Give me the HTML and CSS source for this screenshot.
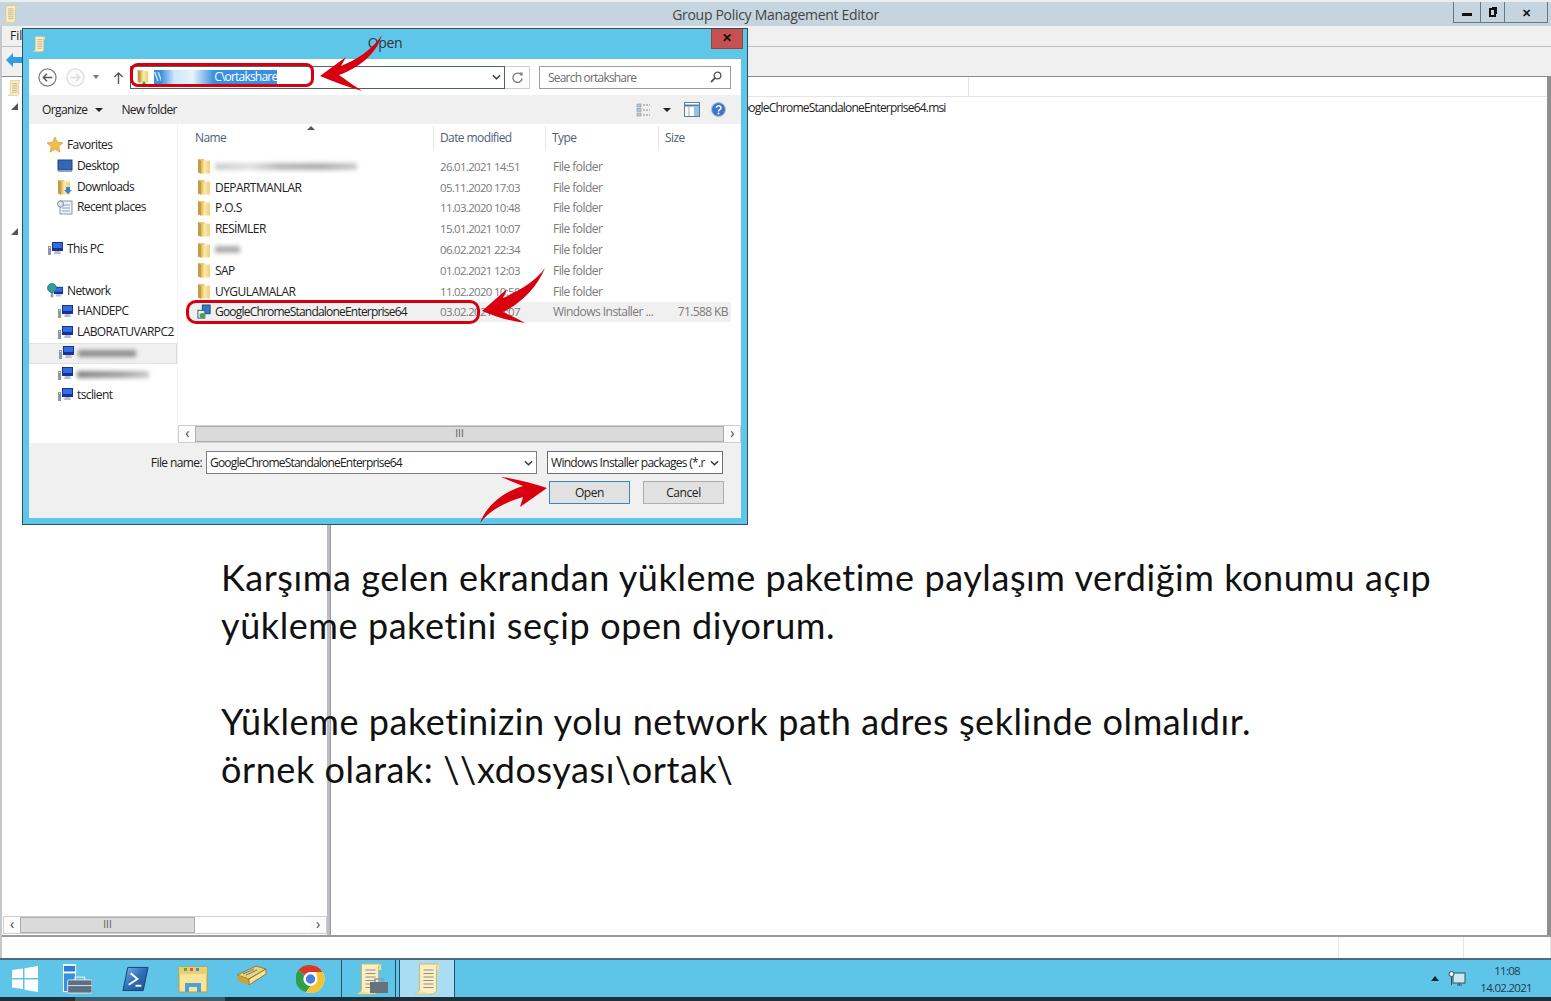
FILE: index.html
```html
<!DOCTYPE html>
<html lang="tr">
<head>
<meta charset="utf-8">
<title>Group Policy Management Editor</title>
<link rel="stylesheet" href="styles.css">
</head>
<body>
<svg class="sprite" aria-hidden="true">
  <defs>
    <linearGradient id="fg" x1="0" y1="0" x2="1" y2="0"><stop offset="0" stop-color="#cfa548"/><stop offset=".45" stop-color="#fbe9a6"/><stop offset="1" stop-color="#f0d07a"/></linearGradient>
    <linearGradient id="psg" x1="0" y1="0" x2="1" y2="1"><stop offset="0" stop-color="#7fb4e6"/><stop offset=".5" stop-color="#2f6fb8"/><stop offset="1" stop-color="#1d4f8c"/></linearGradient>
    <symbol id="folder" viewBox="0 0 14 16"><path d="M1 1h6l1 1.500v12.500H1z" fill="#e8c878"/><path d="M3 2.500l10 0v13H3z" fill="url(#fg)"/><path d="M1 1l3 2v12.500l-3-1z" fill="#c79c40"/></symbol>
    <symbol id="pc" viewBox="0 0 16 16"><rect x="5" y="1" width="11" height="9" fill="#1a2f9c"/><rect x="6" y="2" width="9" height="5" fill="#2f6fe0"/><path d="M8 10h5l1 3H7z" fill="#b7bec8"/><path d="M1 5h3v9H1z" fill="#8b98a6"/><path d="M2 6h1v1H2z" fill="#fff"/></symbol>
    <symbol id="scroll" viewBox="1 1 27 32"><path d="M7 2h19c-2 2-2 4-2 6v20c0 2-2 4-4 4H3c3-1 4-3 4-6z" fill="#fbefc0" stroke="#cfb56f"/><path d="M24 8c0-3 1-5 3-6-1 3 0 5 0 6z" fill="#f3dc98"/><path d="M3 32c2-2 6-3 8-2l9 2z" fill="#f3dc98"/><path d="M11 8h10M11 11.500h10M11 15h10M11 18.500h10M11 22h10M11 25.500h10" stroke="#8e8e8e" stroke-width="1"/></symbol>
  </defs>
</svg>

<div class="desktop">
  <div class="gpme">
    <header class="gpme-title">
      <svg class="title-ico"><use href="#scroll"/></svg>
      <span class="gpme-caption">Group Policy Management Editor</span>
      <div class="caption-btns">
        <span class="cb cb-min"><i></i></span>
        <span class="cb cb-max"><i></i></span>
        <span class="cb cb-close">✕</span>
      </div>
    </header>
    <div class="gpme-menu"><span>File</span></div>
    <div class="gpme-tools">
      <svg class="back-arrow" viewBox="0 0 16 14"><path d="M0 7l7-7v4h9v6H7v4z" fill="#2f9fe0"/></svg>
    </div>
    <div class="gpme-body">
      <aside class="pane-left">
        <div class="tree">
          <svg class="tree-ico"><use href="#scroll"/></svg>
          <span class="tri tri-one"></span>
          <span class="tri tri-two"></span>
        </div>
        <div class="hscroll">
          <span class="sb-btn">‹</span>
          <span class="sb-thumb">III</span>
          <span class="sb-track"></span>
          <span class="sb-btn">›</span>
        </div>
      </aside>
      <div class="splitter"></div>
      <main class="pane-right">
        <div class="pr-head"><span class="pr-head-cell"></span></div>
        <div class="pr-row">GoogleChromeStandaloneEnterprise64.msi</div>
      </main>
      <div class="edge"></div>
    </div>
    <footer class="gpme-status"><span class="st st-a"></span><span class="st st-b"></span><span class="st st-c"></span></footer>
  </div>

  <nav class="taskbar">
    <svg class="tb-win" viewBox="0 0 26 26"><path d="M0 4l11-1.500V12H0zM12.500 2.300L26 0v12H12.500zM0 13.500h11V23L0 21.500zM12.500 13.500H26V26l-13.500-2.200z" fill="#fff"/></svg>
    <svg class="tb-server" viewBox="0 0 32 32"><path d="M1 0h14v30H1z" fill="#fff"/><path d="M2 2h12v6H2z" fill="#2a7fd0"/><path d="M2 10h12v19H2z" fill="#3590de"/><rect x="6" y="17" width="26" height="14" rx="1" fill="#5d7083" stroke="#dfe6ec"/><path d="M14 17v-3h10v3" fill="none" stroke="#dfe6ec" stroke-width="1.500"/><path d="M6 23h26" stroke="#dfe6ec"/></svg>
    <svg class="tb-ps" viewBox="0 0 28 26"><path d="M6 1h21l-5 24H1z" fill="url(#psg)" stroke="#16406f"/><path d="M9 7l7 6-9 6" fill="none" stroke="#fff" stroke-width="2"/><path d="M14 20h6" stroke="#fff" stroke-width="2"/></svg>
    <svg class="tb-exp" viewBox="0 0 30 30"><path d="M1 3h28v25H1z" fill="#f9e59a" stroke="#c79a35"/><path d="M1 3h28v7H1z" fill="#ecce6e"/><rect x="6" y="4" width="3" height="3" fill="#4caf50"/><rect x="12" y="4" width="3" height="3" fill="#d9534f"/><rect x="18" y="4" width="3" height="3" fill="#3f8fd8"/><path d="M7 28v-9h16v9h-4v-5h-8v5z" fill="#4f9fd8"/></svg>
    <svg class="tb-book" viewBox="0 0 30 22"><path d="M0 10L19 1l10 3-17 10z" fill="#e9d27a" stroke="#8d7a35"/><path d="M0 10l12 4v6L1 16z" fill="#c9a33a"/><path d="M12 14l17-10v5L12 20z" fill="#f3e39b" stroke="#8d7a35"/><path d="M6 9l11-5M9 10l11-5" stroke="#58788f"/></svg>
    <svg class="tb-chrome" viewBox="0 0 28 30"><circle cx="14" cy="15" r="14" fill="#fff"/><path d="M14 1a14 14 0 0 1 12.100 7H14a7 7 0 0 0-6.100 3.500L2 6a14 14 0 0 1 12-5z" fill="#d9382c"/><path d="M2 6l5.900 5.500A7 7 0 0 0 14 22l-4.500 6.300A14 14 0 0 1 2 6z" fill="#2f9e48"/><path d="M26.100 8A14 14 0 0 1 9.500 28.300L14 22a7 7 0 0 0 6-10.500L20 8z" fill="#f4c430"/><circle cx="14" cy="15" r="5.400" fill="#4a7fe0" stroke="#fff" stroke-width="1.400"/></svg>
    <div class="tb-task tb-task-gp">
      <svg class="tb-scroll"><use href="#scroll"/></svg>
      <svg class="tb-case" viewBox="0 0 20 16"><rect x="1" y="4" width="18" height="11" fill="#66717c"/><path d="M6 4V1h8v3" fill="none" stroke="#8f9aa3" stroke-width="1.500"/></svg>
    </div>
    <div class="tb-task tb-task-active"><svg class="tb-scroll"><use href="#scroll"/></svg></div>
    <div class="tray">
      <span class="tray-tri"></span>
      <svg class="tray-net" viewBox="0 0 18 18"><rect x="5" y="3" width="12" height="10" fill="#cfe7ee" stroke="#35505f"/><path d="M9 15h5M11.500 13v2" stroke="#35505f"/><circle cx="3.500" cy="4" r="2.500" fill="#eef5f7" stroke="#35505f"/><path d="M3.500 6.500V15" stroke="#35505f"/></svg>
      <div class="clock"><span>11:08</span><span>14.02.2021</span></div>
    </div>
  </nav>
  <div class="strip"><span class="strip-thumb"></span></div>

  <section class="dialog">
    <header class="dlg-title">
      <svg class="dlg-ico"><use href="#scroll"/></svg>
      <span class="dlg-caption">Open</span>
      <span class="dlg-close">✕</span>
    </header>
    <div class="dlg-inner">
      <div class="addr-row">
        <svg class="nav-back" viewBox="0 0 20 20"><circle cx="10" cy="10" r="9" fill="#fff" stroke="#7c7c7c" stroke-width="1.300"/><path d="M15 10H6M9.500 6L5.500 10l4 4" fill="none" stroke="#555" stroke-width="1.500"/></svg>
        <svg class="nav-fwd" viewBox="0 0 20 20"><circle cx="10" cy="10" r="9" fill="#fafafa" stroke="#dcdcdc" stroke-width="1.300"/><path d="M5 10h9M10.500 6l4 4-4 4" fill="none" stroke="#dcdcdc" stroke-width="1.500"/></svg>
        <span class="nav-drop"></span>
        <svg class="nav-up" viewBox="0 0 12 14"><path d="M6 14V2M1.500 6.500L6 2l4.500 4.500" fill="none" stroke="#555" stroke-width="1.500"/></svg>
        <div class="addr-box">
          <svg class="addr-folder" viewBox="0 0 14 16"><use href="#folder" width="14" height="14"/><path d="M5 16l3-4 3 4z" fill="#3aa655"/></svg>
          <span class="addr-sel">\\<span class="addr-gap"></span>C\ortakshare</span>
          <svg class="chev" viewBox="0 0 10 6"><path d="M1 1l4 4 4-4" fill="none" stroke="#333" stroke-width="1.500"/></svg>
        </div>
        <div class="refresh"><svg viewBox="0 0 14 14"><path d="M11.500 5A5 5 0 1 0 12 8" fill="none" stroke="#7a7a7a" stroke-width="1.400"/><path d="M9 1.500h3.500V5z" fill="#7a7a7a"/></svg></div>
        <div class="search-box"><span>Search ortakshare</span><svg viewBox="0 0 12 12"><circle cx="7.500" cy="4.500" r="3.300" fill="none" stroke="#555" stroke-width="1.300"/><path d="M5 7l-4 4" stroke="#555" stroke-width="1.800"/></svg></div>
      </div>
      <div class="dlg-tools">
        <span class="tool">Organize</span><span class="tool-tri"></span>
        <span class="tool tool-new">New folder</span>
        <div class="tool-right">
          <svg class="tool-view" viewBox="0 0 15 14"><rect x="1" y="1" width="4" height="3" fill="#b7c6d3" stroke="#8b9aa6" stroke-width=".6"/><rect x="1" y="5.500" width="4" height="3" fill="#b7c6d3" stroke="#8b9aa6" stroke-width=".6"/><rect x="1" y="10" width="4" height="3" fill="#b7c6d3" stroke="#8b9aa6" stroke-width=".6"/><path d="M7 2h7M7 7h7M7 12h7" stroke="#8a8a8a" stroke-dasharray="2 1"/></svg>
          <span class="tool-tri tool-tri-dark"></span>
          <svg class="tool-pane" viewBox="0 0 16 15"><rect x=".5" y=".5" width="15" height="14" fill="#fff" stroke="#5f7c93"/><path d="M.5 3.500h15" stroke="#5f7c93" stroke-width="2"/><rect x="10" y="4" width="5" height="10" fill="#8fc2ea"/><path d="M5 4v10" stroke="#9ab"/></svg>
          <svg class="tool-help" viewBox="0 0 15 15"><circle cx="7.500" cy="7.500" r="7" fill="#3f76c9" stroke="#a8c3e6"/><path d="M5.300 5.800a2.300 2.100 0 1 1 3.400 1.800c-.8.500-1.200.9-1.200 1.800" fill="none" stroke="#fff" stroke-width="1.500"/><circle cx="7.500" cy="11.500" r="1" fill="#fff"/></svg>
        </div>
      </div>
      <div class="dlg-content">
        <ul class="navlist">
          <li class="nv-top"><svg class="nv-ico" viewBox="0 0 16 16"><path d="M8 0l2.400 5.200 5.600.6-4.200 3.800 1.200 5.600L8 12.300l-5 2.900 1.200-5.600L0 5.800l5.600-.6z" fill="#f1bd4b" stroke="#c8932c" stroke-width=".6"/></svg>Favorites</li>
          <li class="nv-child"><svg class="nv-ico" viewBox="0 0 16 16"><rect x="1" y="2" width="14" height="10" fill="#3268b8" stroke="#25406e"/><path d="M1 12h14v2H1z" fill="#8ea3b8"/></svg>Desktop</li>
          <li class="nv-child"><svg class="nv-ico" viewBox="0 0 16 16"><use href="#folder" width="14" height="16"/><path d="M9 8h4v3h2l-4 4-4-4h2z" fill="#2f86d8"/></svg>Downloads</li>
          <li class="nv-child"><svg class="nv-ico" viewBox="0 0 16 16"><rect x="3" y="1" width="12" height="13" fill="#eef2f6" stroke="#8a98a8"/><path d="M5 5h8M5 8h8M5 11h8" stroke="#8fa4bc"/><circle cx="3.500" cy="4" r="3" fill="#dfe6ee" stroke="#7d8c9c"/></svg>Recent places</li>
          <li class="nv-gap"></li>
          <li class="nv-top"><svg class="nv-ico"><use href="#pc"/></svg>This PC</li>
          <li class="nv-gap"></li>
          <li class="nv-top"><svg class="nv-ico" viewBox="0 0 16 16"><use href="#pc" x="3" y="3" width="13" height="13"/><circle cx="5" cy="5" r="4.500" fill="#2f9d9a" stroke="#1d6f88" stroke-width=".7"/></svg>Network</li>
          <li class="nv-child"><svg class="nv-ico"><use href="#pc"/></svg>HANDEPC</li>
          <li class="nv-child"><svg class="nv-ico"><use href="#pc"/></svg>LABORATUVARPC2</li>
          <li class="nv-child nv-sel"><svg class="nv-ico"><use href="#pc"/></svg><span class="blur blur-a"></span></li>
          <li class="nv-child"><svg class="nv-ico"><use href="#pc"/></svg><span class="blur blur-b"></span></li>
          <li class="nv-child"><svg class="nv-ico"><use href="#pc"/></svg>tsclient</li>
        </ul>
        <div class="files">
          <div class="col-head">
            <span class="ch ch-name">Name<i class="sort"></i></span>
            <span class="ch ch-date">Date modified</span>
            <span class="ch ch-type">Type</span>
            <span class="ch ch-size">Size</span>
          </div>
          <div class="rows">
            <div class="row"><span class="nm"><svg class="f-ico"><use href="#folder"/></svg><span class="blur blur-c"></span></span><span class="dt">26.01.2021 14:51</span><span class="ty">File folder</span><span></span></div>
            <div class="row"><span class="nm"><svg class="f-ico"><use href="#folder"/></svg>DEPARTMANLAR</span><span class="dt">05.11.2020 17:03</span><span class="ty">File folder</span><span></span></div>
            <div class="row"><span class="nm"><svg class="f-ico"><use href="#folder"/></svg>P.O.S</span><span class="dt">11.03.2020 10:48</span><span class="ty">File folder</span><span></span></div>
            <div class="row"><span class="nm"><svg class="f-ico"><use href="#folder"/></svg>RESİMLER</span><span class="dt">15.01.2021 10:07</span><span class="ty">File folder</span><span></span></div>
            <div class="row"><span class="nm"><svg class="f-ico"><use href="#folder"/></svg><span class="blur blur-d"></span></span><span class="dt">06.02.2021 22:34</span><span class="ty">File folder</span><span></span></div>
            <div class="row"><span class="nm"><svg class="f-ico"><use href="#folder"/></svg>SAP</span><span class="dt">01.02.2021 12:03</span><span class="ty">File folder</span><span></span></div>
            <div class="row"><span class="nm"><svg class="f-ico"><use href="#folder"/></svg>UYGULAMALAR</span><span class="dt">11.02.2020 10:50</span><span class="ty">File folder</span><span></span></div>
            <div class="row row-sel"><span class="nm nm-long"><svg class="f-ico" viewBox="0 0 16 16"><rect x="6" y="0" width="9" height="10" fill="#2f7fc8" stroke="#1c3f66"/><rect x="1" y="6" width="8" height="9" fill="#e6edf2" stroke="#3b4d5c"/><circle cx="6" cy="12" r="3" fill="#3aa655"/></svg>GoogleChromeStandaloneEnterprise64</span><span class="dt">03.02.2021 14:07</span><span class="ty">Windows Installer ...</span><span class="sz">71.588 KB</span></div>
          </div>
          <div class="hscroll hscroll-dlg">
            <span class="sb-btn">‹</span>
            <span class="sb-thumb sb-thumb-full">III</span>
            <span class="sb-btn">›</span>
          </div>
        </div>
      </div>
      <div class="dlg-foot">
        <div class="foot-fields">
          <label class="fn-label">File name:</label>
          <div class="fn-input"><span>GoogleChromeStandaloneEnterprise64</span><svg class="chev" viewBox="0 0 10 6"><path d="M1 1l4 4 4-4" fill="none" stroke="#333" stroke-width="1.500"/></svg></div>
          <div class="fn-filter"><span class="fn-filter-text">Windows Installer packages (*.r</span><svg class="chev" viewBox="0 0 10 6"><path d="M1 1l4 4 4-4" fill="none" stroke="#333" stroke-width="1.500"/></svg></div>
        </div>
        <div class="foot-btns">
          <button class="btn btn-def">Open</button>
          <button class="btn">Cancel</button>
        </div>
      </div>
    </div>
  </section>

  <div class="note">
    <p>Karşıma gelen ekrandan yükleme paketime paylaşım verdiğim konumu açıp<br>yükleme paketini seçip open diyorum.</p>
    <p>Yükleme paketinizin yolu network path adres şeklinde olmalıdır.<br>örnek olarak: \\xdosyası\ortak\</p>
  </div>

  <div class="mark mark-addr"></div>
  <div class="mark mark-file"></div>
  <svg class="arrows" viewBox="0 0 1551 1001">
    <path d="M320 76L346 57L341 66C356 60 372 50 382 35C375 56 358 68 339 75C347 81 355 86 362 91C348 87 334 82 320 76Z" fill="#d8000f"/>
    <path d="M482 311L507 289L503 298C520 290 535 282 545 268C537 288 520 304 503 312C512 316 518 319 525 323C510 321 496 317 482 311Z" fill="#d8000f"/>
    <path d="M547 488L520 507L523 497C505 502 490 510 480 523C486 506 503 492 523 486C516 483 508 480 501 477C517 479 532 483 547 488Z" fill="#d8000f"/>
  </svg>
</div>
</body>
</html>
```

FILE: styles.css
```css
* { box-sizing: border-box; }
html, body { margin: 0; padding: 0; }
body { font-family: "Open Sans", "Liberation Sans", sans-serif; font-size: 12px; color: #222; background: #fff; }
.sprite { position: absolute; width: 0; height: 0; }
.desktop { position: relative; width: 1551px; height: 1001px; overflow: hidden; display: flex; flex-direction: column; background: #fff; }

/* main window */
.gpme { flex: 1; min-height: 0; display: flex; flex-direction: column; border-left: 2px solid #c4c8cc; }
.gpme-title { height: 26px; flex: none; background: #c5d4de; display: flex; align-items: center; position: relative; margin-left: -2px; border-top: 2px solid #e9eef1; }
.title-ico { width: 16px; height: 18px; margin-left: 2px; }
.gpme-caption { position: absolute; left: 0; right: 0; text-align: center; font-size: 14px; letter-spacing: -.3px; color: #444; }
.caption-btns { margin-left: auto; margin-right: 3px; align-self: flex-start; height: 21px; display: flex; border: 1px solid #5f7a88; border-top: none; }
.cb { display: flex; align-items: center; justify-content: center; color: #111; font-size: 11px; font-weight: 700; }
.cb + .cb { border-left: 1px solid #5f7a88; }
.cb-min { width: 26px; }
.cb-min i { width: 10px; height: 3px; background: #111; margin-top: 5px; }
.cb-max { width: 24px; }
.cb-max i { width: 7px; height: 9px; border: 2px solid #111; box-shadow: 2px -2px 0 -1px #111; }
.cb-close { width: 43px; }
.gpme-menu { height: 21px; flex: none; background: #f0f0f0; border-bottom: 1px solid #bfbfbf; padding: 0 8px; line-height: 19px; }
.gpme-tools { height: 30px; flex: none; background: #f0f0f0; border-bottom: 1px solid #8a8a8a; display: flex; align-items: center; padding-left: 4px; }
.back-arrow { width: 16px; height: 14px; margin-top: -4px; }
.gpme-body { flex: 1; min-height: 0; display: flex; border-bottom: 2px solid #9a9a9a; }
.pane-left { width: 325px; flex: none; display: flex; flex-direction: column; }
.tree { flex: 1; position: relative; }
.tree-ico { position: absolute; left: 5px; top: 3px; width: 14px; height: 16px; }
.tri { position: absolute; left: 9px; width: 0; height: 0; border-left: 7px solid transparent; border-bottom: 7px solid #555; }
.tri-one { top: 26px; }
.tri-two { top: 151px; }
.splitter { width: 4px; flex: none; background: #bcbcc4; border-right: 1px solid #9a9aa4; }
.pane-right { flex: 1; min-width: 0; background: #fff; }
.pr-head { height: 20px; border-bottom: 1px solid #e4e4e4; }
.pr-head-cell { display: block; width: 638px; height: 19px; border-right: 1px solid #e4e4e4; }
.pr-row { padding-left: 403px; line-height: 22px; white-space: nowrap; overflow: hidden; letter-spacing: -.8px; color: #222; }
.edge { width: 4px; flex: none; background: #8f8f8f; }

/* scroll bars */
.hscroll { height: 18px; flex: none; display: flex; margin: 0 0 1px 1px; border: 1px solid #cfcfcf; background: #fff; }
.sb-btn { width: 16px; flex: none; text-align: center; line-height: 14px; font-size: 14px; color: #444; background: #fbfbfb; }
.sb-thumb { width: 175px; flex: none; text-align: center; background: #dadada; border: 1px solid #adadad; font-size: 10px; line-height: 13px; color: #555; letter-spacing: 0; }
.sb-track { flex: 1; }
.sb-thumb-full { flex: 1; width: auto; }
.hscroll-dlg { margin: 0; }

.gpme-status { height: 21px; flex: none; display: flex; background: #fff; }
.st { display: block; border-right: 1px solid #e6e6e6; }
.st-a { width: 1337px; }
.st-b { width: 125px; }
.st-c { flex: 1; }

/* task bar */
.taskbar { height: 39px; flex: none; background: #5ec4e8; border-top: 2px solid #4d6b7b; display: flex; align-items: center; position: relative; }
.taskbar > svg { flex: none; }
.tb-win { width: 26px; height: 26px; margin-left: 12px; }
.tb-server { width: 30px; height: 32px; margin-left: 24px; }
.tb-ps { width: 27px; height: 26px; margin-left: 30px; }
.tb-exp { width: 30px; height: 30px; margin-left: 29px; }
.tb-book { width: 30px; height: 22px; margin-left: 29px; margin-top: -6px; }
.tb-chrome { width: 29px; height: 30px; margin-left: 29px; }
.tb-task { position: relative; align-self: stretch; width: 55px; flex: none; display: flex; align-items: center; justify-content: center; border-left: 1px solid #2c4d62; border-right: 1px solid #2c4d62; }
.tb-task-gp { margin-left: 16px; }
.tb-task-active { margin-left: 3px; width: 56px; background: #a9ddf2; }
.tb-scroll { width: 28px; height: 32px; }
.tb-case { position: absolute; left: 27px; top: 18px; width: 20px; height: 16px; }
.tray { margin-left: auto; display: flex; align-items: center; }
.tray-tri { width: 0; height: 0; border: 4px solid transparent; border-bottom: 5px solid #123; border-top: none; margin-right: 9px; }
.tray-net { width: 18px; height: 18px; margin-right: 14px; }
.clock { width: 71px; padding-right: 19px; display: flex; flex-direction: column; align-items: flex-end; font-size: 11.500px; line-height: 17px; letter-spacing: -.7px; color: #263b48; text-align: center; }
.clock span:first-child { margin-right: 12px; }
.strip { height: 4px; flex: none; background: #1f2e38; position: relative; }
.strip-thumb { position: absolute; left: 75px; width: 150px; top: 0; bottom: 0; background: #3f5a68; }

/* dialog */
.dialog { position: absolute; left: 22px; top: 28px; width: 726px; height: 497px; background: #5ec6e9; border: 1px solid #34505f; display: flex; flex-direction: column; padding: 0 6px 6px; }
.dlg-title { height: 30px; flex: none; position: relative; display: flex; align-items: center; }
.dlg-ico { width: 14px; height: 16px; margin-left: 3px; }
.dlg-caption { position: absolute; left: 0; right: 0; text-align: center; font-size: 14px; letter-spacing: -.3px; color: #333; margin-top: -3px; }
.dlg-close { position: absolute; right: -2px; top: 0; width: 32px; height: 20px; background: #c75050; border: 1px solid #8f4444; border-top: none; text-align: center; color: #111; font-size: 12px; font-weight: 700; line-height: 18px; }
.dlg-inner { flex: 1; min-height: 0; background: #fff; display: flex; flex-direction: column; letter-spacing: -.6px; }

.addr-row { height: 36px; flex: none; display: flex; align-items: center; }
.nav-back { width: 19px; height: 19px; margin-left: 9px; }
.nav-fwd { width: 19px; height: 19px; margin-left: 9px; }
.nav-drop { width: 0; height: 0; border: 3.500px solid transparent; border-top: 4px solid #777; margin: 3px 0 0 8px; }
.nav-up { width: 11px; height: 13px; margin-left: 14px; }
.addr-box { width: 375px; height: 23px; margin-left: 6px; border: 1px solid #52606b; display: flex; align-items: center; }
.addr-folder { width: 14px; height: 16px; margin-left: 5px; }
.addr-sel { margin-left: 4px; background: #3b8fe0; color: #fff; height: 14px; line-height: 14px; display: flex; letter-spacing: -.8px; white-space: nowrap; }
.addr-gap { width: 53px; background: linear-gradient(90deg, #3b8fe0, #cfe6fb 25%, #e8f3fd 60%, #3b8fe0); }
.chev { width: 9px; height: 6px; margin-left: auto; margin-right: 3px; flex: none; }
.refresh { width: 25px; height: 23px; border: 1px solid #cfcfcf; border-left: none; display: flex; align-items: center; justify-content: center; }
.refresh svg { width: 13px; height: 13px; }
.search-box { width: 192px; height: 23px; margin-left: 9px; border: 1px solid #9c9c9c; display: flex; align-items: center; justify-content: space-between; padding: 0 8px; color: #6d6d6d; letter-spacing: -.8px; }
.search-box svg { width: 12px; height: 12px; }

.dlg-tools { height: 29px; flex: none; background: #f0f0f0; display: flex; align-items: center; padding-left: 13px; }
.tool { color: #222; }
.tool-tri { width: 0; height: 0; border: 4px solid transparent; border-top: 4px solid #222; margin: 4px 0 0 8px; }
.tool-new { margin-left: 18px; }
.tool-right { margin-left: auto; display: flex; align-items: center; }
.tool-view { width: 15px; height: 14px; }
.tool-tri-dark { margin: 4px 0 0 12px; }
.tool-pane { width: 16px; height: 15px; margin-left: 13px; }
.tool-help { width: 15px; height: 15px; margin: 0 15px 0 11px; }

.dlg-content { height: 319px; flex: none; display: flex; }
.navlist { width: 148px; flex: none; margin: 0; padding: 11px 0 0; list-style: none; }
.navlist li { height: 20.800px; line-height: 20.800px; display: flex; align-items: center; white-space: nowrap; }
.nv-top { padding-left: 18px; }
.nv-child { padding-left: 28px; }
.nv-ico { width: 16px; height: 16px; margin-right: 4px; flex: none; }
.nv-sel { background: #f0f0f0; border: 1px solid #e2e2e2; border-right-color: #d9d9d9; }
.blur { display: block; height: 7px; background: #777; filter: blur(2px); opacity: .8; }
.blur-a { width: 58px; }
.blur-b { width: 72px; background: linear-gradient(90deg, #666, #888 60%, #bbb); }
.blur-c { width: 142px; opacity: .6; background: linear-gradient(90deg, #aaa, #ccc 25%, #888 45%, #777 75%, #aaa); }
.blur-d { width: 25px; opacity: .6; }

.files { flex: 1; min-width: 0; display: flex; flex-direction: column; border-left: 1px solid #f3f3f3; }
.col-head { height: 24px; margin-top: 2px; flex: none; display: grid; grid-template-columns: 256px 112px 113px 76px; color: #4d6074; }
.ch { display: block; padding-left: 6px; line-height: 24px; border-right: 1px solid #e5e5e5; position: relative; }
.ch-name { padding-left: 17px; }
.ch-size { border-right: none; }
.sort { position: absolute; left: 129px; top: 0; width: 0; height: 0; border: 4px solid transparent; border-bottom: 4px solid #555; border-top: none; }
.rows { flex: 1; min-height: 0; padding-top: 6px; }
.row { height: 20.800px; margin-left: 8px; width: 545px; display: grid; grid-template-columns: 254px 113px 112px 1fr; align-items: center; color: #7a7a7a; white-space: nowrap; }
.row-sel { background: #f0f0f0; }
.nm { display: flex; align-items: center; color: #222; padding-left: 11px; letter-spacing: -.55px; }
.nm-long { letter-spacing: -.8px; }
.f-ico { width: 14px; height: 16px; margin-right: 4px; flex: none; }
.dt { display: block; font-size: 11.500px; letter-spacing: -.7px; }
.ty { display: block; letter-spacing: -.55px; }
.sz { text-align: right; padding-right: 3px; }

.dlg-foot { flex: 1; min-height: 0; background: #f0f0f0; padding: 8px 17px 0 0; display: flex; flex-direction: column; }
.foot-fields { display: flex; align-items: center; }
.fn-label { width: 173px; text-align: right; }
.fn-input, .fn-filter { height: 23px; background: #fff; border: 1px solid #7d7d7d; display: flex; align-items: center; padding-left: 3px; white-space: nowrap; }
.fn-input { width: 331px; margin-left: 4px; letter-spacing: -.8px; }
.fn-filter { width: 176px; margin-left: 10px; border-color: #6e6e6e; letter-spacing: -.7px; }
.fn-filter-text { flex: 1; min-width: 0; overflow: hidden; }
.foot-btns { display: flex; justify-content: flex-end; gap: 13px; margin-top: 7px; }
.btn { width: 81px; height: 23px; padding: 0; font: inherit; letter-spacing: -.4px; background: #e1e1e1; color: #222; border: 1px solid #adadad; }
.btn-def { border-color: #3a87b8; }

/* annotations */
.note { position: absolute; left: 221px; top: 553px; font-family: Lato, "Open Sans", sans-serif; font-size: 36px; line-height: 48px; letter-spacing: .58px; color: #111; }
.note p { margin: 0 0 48px; white-space: nowrap; }
.mark { position: absolute; border: 3px solid #d8000f; }
.mark-addr { left: 130px; top: 63px; width: 184px; height: 24px; border-radius: 8px; }
.mark-file { left: 186px; top: 300px; width: 294px; height: 24px; border-radius: 10px; }
.arrows { position: absolute; left: 0; top: 0; width: 1551px; height: 1001px; pointer-events: none; }
```
